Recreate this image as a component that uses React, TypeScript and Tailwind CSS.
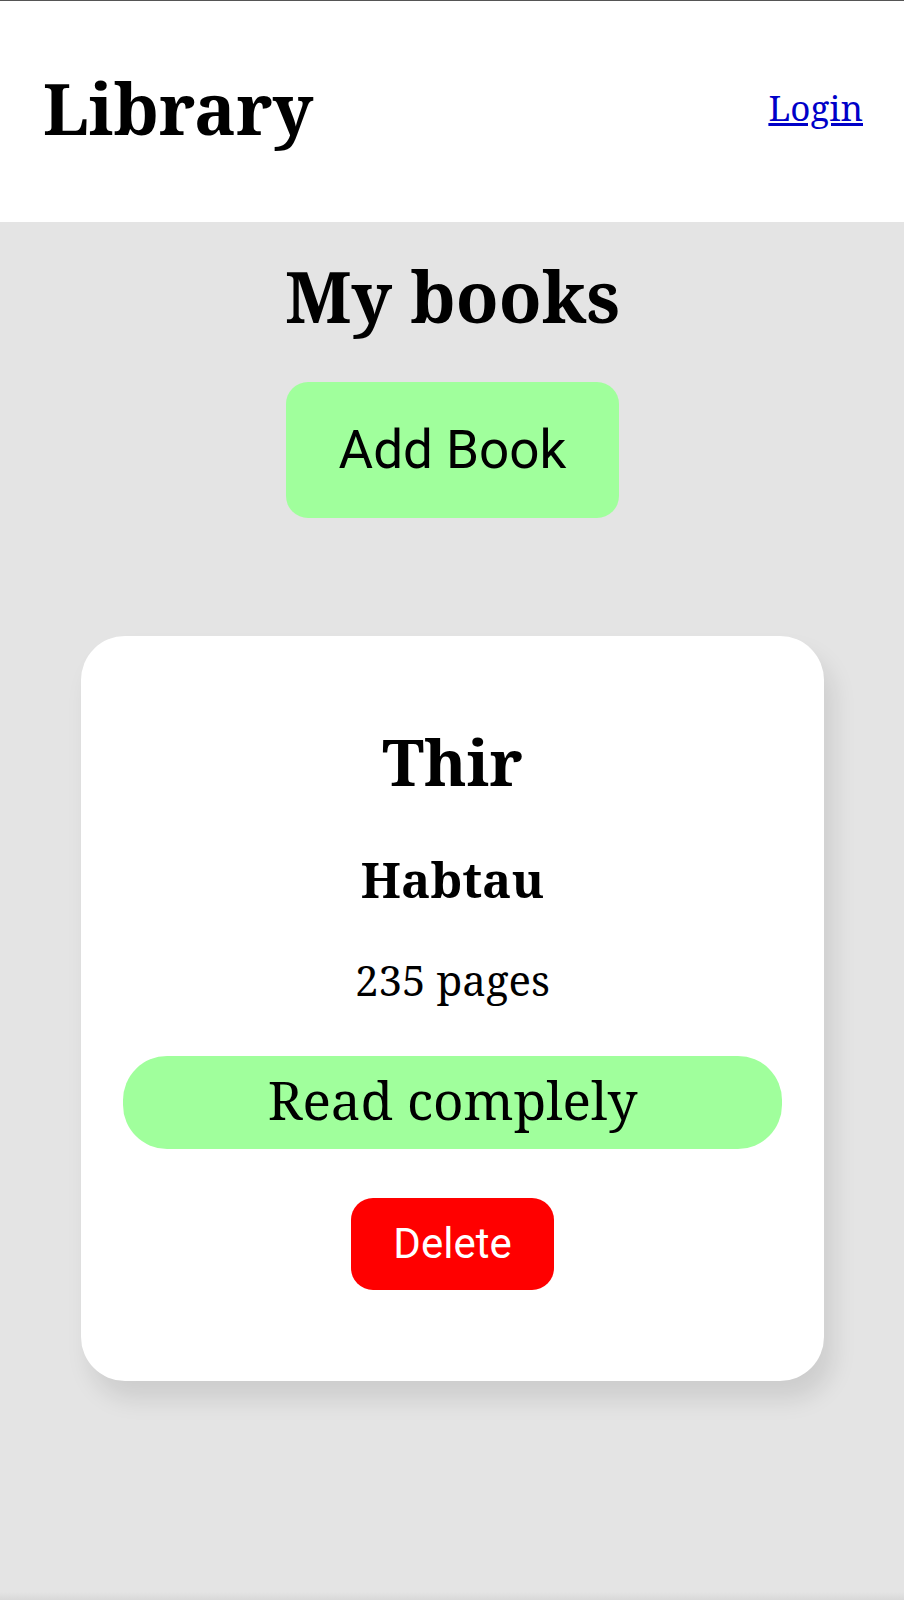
type Book = { title: string; author: string; pages: number; status: string };

const books: Book[] = [
  { title: "Thir", author: "Habtau", pages: 235, status: "Read complely" },
];

function BookCard({ book }: { book: Book }) {
  return (
    <article className="flex w-full flex-col items-center rounded-[44px] bg-white px-[42px] pt-[82px] pb-[91px] shadow-[9px_18px_24px_rgba(0,0,0,0.1)]">
      <h2 className="text-[64px] leading-[88px] font-bold">{book.title}</h2>
      <h3 className="mt-10 text-[49px] leading-[66px] font-bold">{book.author}</h3>
      <p className="mt-[38px] text-[42px] leading-[60px]">{book.pages} pages</p>
      <p className="mt-[46px] w-full rounded-[44px] bg-[#a0ff9c] pt-2 pb-[13px] text-center text-[53px] leading-[72px]">
        {book.status}
      </p>
      <button
        type="button"
        className="mt-[49px] rounded-[22px] bg-[#ff0000] px-[42px] py-[18px] font-['Roboto',sans-serif] text-[42px] leading-[56px] text-white"
      >
        Delete
      </button>
    </article>
  );
}

export default function App() {
  return (
    <div className="flex min-h-screen flex-col border-t border-[#555555] bg-[#e4e4e4] font-['Noto_Serif','DejaVu_Serif',serif] text-black">
      <header className="flex items-center justify-between bg-white pt-[59px] pr-[41px] pb-[66px] pl-[43px]">
        <h1 className="text-[70px] leading-[96px] font-bold">Library</h1>
        <a href="#login" className="text-[35px] leading-[48px] text-[#0000c8] underline decoration-3">
          Login
        </a>
      </header>
      <main className="flex grow flex-col items-center pt-[26px] pr-20 pb-20 pl-[81px]">
        <h2 className="text-[70px] leading-[96px] font-bold">My books</h2>
        <button
          type="button"
          className="mt-[38px] rounded-[22px] bg-[#a0ff9c] px-[53px] py-9 font-['Roboto',sans-serif] text-[53px] leading-[64px]"
        >
          Add Book
        </button>
        <section className="mt-[118px] flex w-full flex-col gap-20">
          {books.map((book) => (
            <BookCard key={book.title} book={book} />
          ))}
        </section>
      </main>
      <footer className="h-2 bg-linear-to-b from-[#e4e4e4] to-[#d8d8d8]" />
    </div>
  );
}
